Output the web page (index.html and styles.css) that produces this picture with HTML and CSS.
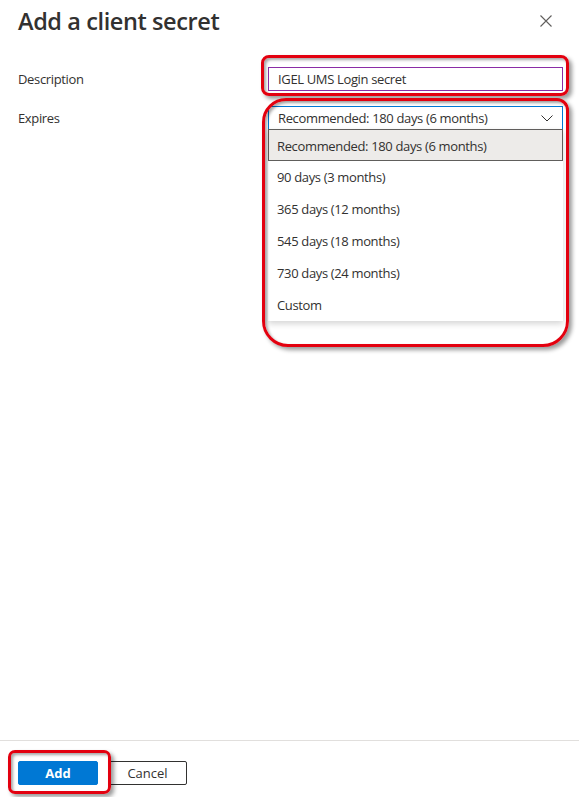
FILE: index.html
```html
<!DOCTYPE html>
<html lang="en">
<head>
<meta charset="UTF-8">
<meta name="viewport" content="width=device-width, initial-scale=1.0">
<title>Add a client secret</title>
<link rel="stylesheet" href="styles.css">
</head>
<body>
<div class="panel">
  <div class="header">
    <h1>Add a client secret</h1>
    <button class="close" aria-label="Close">
      <svg width="12" height="12" viewBox="0 0 12 12"><path d="M0.5 0.5 L11.5 11.5 M11.5 0.5 L0.5 11.5" stroke="#605e5c" stroke-width="1.1" fill="none"/></svg>
    </button>
  </div>

  <div class="form">
    <label class="label">Description</label>
    <div class="field">
      <input class="text-input" type="text" value="IGEL UMS Login secret">
    </div>

    <label class="label">Expires</label>
    <div class="field">
      <div class="dropdown">
        <span>Recommended: 180 days (6 months)</span>
        <svg width="12" height="7" viewBox="0 0 12 7"><path d="M0.5 0.5 L6 6 L11.5 0.5" stroke="#323130" stroke-width="1" fill="none"/></svg>
      </div>
      <ul class="menu">
        <li class="selected">Recommended: 180 days (6 months)</li>
        <li>90 days (3 months)</li>
        <li>365 days (12 months)</li>
        <li>545 days (18 months)</li>
        <li>730 days (24 months)</li>
        <li>Custom</li>
      </ul>
    </div>
  </div>

  <div class="footer">
    <button class="btn btn-primary">Add</button>
    <button class="btn btn-default">Cancel</button>
  </div>
</div>

<!-- callouts drawn over the screenshot -->
<div class="callout callout-desc"></div>
<div class="callout callout-menu"></div>
<div class="callout callout-add"></div>
</body>
</html>
```

FILE: styles.css
```css
body {
  margin: 0;
  font-family: "Open Sans", "Noto Sans", sans-serif;
  color: #323130;
  background: #fff;
  position: relative;
}

.panel {
  height: 797px;
  display: flex;
  flex-direction: column;
}

.header {
  display: flex;
  justify-content: space-between;
  align-items: flex-start;
  padding: 4px 20px 0 18px;
}

.header h1 {
  margin: 0;
  font-size: 23.5px;
  font-weight: 600;
  line-height: 34px;
  letter-spacing: -0.4px;
}

.close {
  border: none;
  background: none;
  padding: 0;
  margin-top: 11px;
  margin-right: 7px;
  width: 12px;
  height: 12px;
  display: flex;
}

.form {
  display: grid;
  grid-template-columns: 250px 295px;
  grid-auto-rows: 24px;
  row-gap: 15px;
  padding: 29px 0 0 18px;
  font-size: 13px;
  letter-spacing: -0.35px;
}

.label {
  line-height: 24px;
}

.field {
  position: relative;
}

.text-input {
  box-sizing: border-box;
  width: 100%;
  height: 24px;
  margin: 0;
  border: 1px solid #8a2da5;
  border-radius: 0;
  padding: 0 9px;
  font: inherit;
  letter-spacing: inherit;
  color: #323130;
  outline: none;
}

.dropdown {
  box-sizing: border-box;
  height: 24px;
  border: 1px solid #0078d4;
  padding: 0 9px 0 9px;
  display: flex;
  justify-content: space-between;
  align-items: center;
}

.menu {
  position: absolute;
  left: 0;
  right: 0;
  top: 23px;
  margin: 0;
  padding: 0;
  list-style: none;
  background: #fff;
  box-shadow: 0 3px 6px rgba(0, 0, 0, 0.16);
  z-index: 2;
}

.menu li {
  box-sizing: border-box;
  height: 32px;
  line-height: 32px;
  padding-left: 8px;
  border: 1px solid transparent;
  border-top: none;
}

.menu li.selected {
  background: #edebe9;
  border: 1px solid #605e5c;
}

.footer {
  margin-top: auto;
  border-top: 1px solid #e1dfdd;
  padding: 20px 18px 12px;
  display: flex;
  gap: 10px;
}

.btn {
  box-sizing: border-box;
  width: 80px;
  height: 24px;
  border-radius: 2px;
  font-family: inherit;
  font-size: 13px;
  padding: 0;
}

.btn-primary {
  background: #0078d4;
  border: 1px solid #0078d4;
  color: #fff;
  font-weight: 700;
}

.btn-default {
  background: #fff;
  border: 1px solid #323130;
  color: #323130;
  width: 79px;
}

.callout {
  position: absolute;
  box-sizing: border-box;
  border: 3px solid #e3000f;
  box-shadow: 3px 3px 4px rgba(0, 0, 0, 0.4), inset 2px 2px 3px rgba(0, 0, 0, 0.35);
  z-index: 5;
  pointer-events: none;
}

.callout-desc {
  left: 261px;
  top: 55px;
  width: 308px;
  height: 41px;
  border-radius: 8px;
}

.callout-menu {
  left: 262px;
  top: 98px;
  width: 307px;
  height: 249px;
  border-radius: 24px 12px 26px 26px;
}

.callout-add {
  left: 8px;
  top: 750px;
  width: 103px;
  height: 44px;
  border-radius: 7px;
}
```
